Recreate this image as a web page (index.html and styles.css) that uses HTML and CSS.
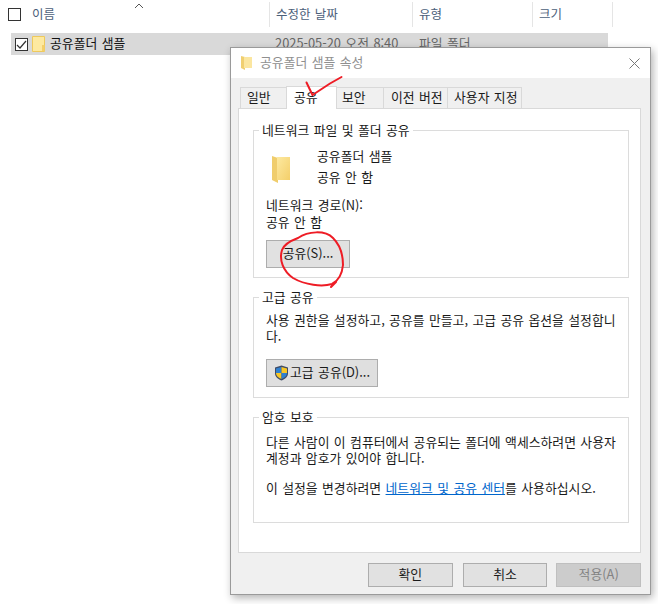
FILE: index.html
```html
<!DOCTYPE html>
<html lang="ko">
<head>
<meta charset="utf-8">
<title>공유폴더 샘플 속성</title>
<link rel="stylesheet" href="styles.css">
</head>
<body>
<svg width="0" height="0" class="defs">
  <defs>
    <linearGradient id="fg" x1="0" y1="0" x2="1" y2="1"><stop offset="0" stop-color="#fde9a0"/><stop offset="1" stop-color="#f4cf6a"/></linearGradient>
  </defs>
</svg>
<div class="explorer">
  <div class="head">
    <span class="check head-check"></span>
    <div class="col col-name">이름<svg class="caret" width="10" height="6" viewBox="0 0 10 6"><path d="M1 5 5 1l4 4" fill="none" stroke="#555"/></svg></div>
    <div class="col col-date">수정한 날짜</div>
    <div class="col col-type">유형</div>
    <div class="col col-size">크기</div>
  </div>
  <div class="row">
    <span class="check row-check"><svg width="11" height="11" viewBox="0 0 11 11"><path d="M1 6l3 3 6-7" fill="none" stroke="#333" stroke-width="1.2"/></svg></span>
    <svg class="row-folder" width="13" height="16" viewBox="0 0 13 16"><path d="M.5.5h12v15H.5z" fill="#fde9a0" stroke="#eec95c"/><path d="M10 15V9h2.500v6z" fill="#f4cf6a"/></svg>
    <span class="row-name">공유폴더 샘플</span>
    <span class="row-date">2025-05-20 오전 8:40</span>
    <span class="row-type">파일 폴더</span>
  </div>
</div>

<div class="dialog">
  <div class="titlebar">
    <svg class="title-icon" width="11" height="14" viewBox="0 0 11 14"><path d="M0 0l4 1v13l-4-2z" fill="#f0cf70"/><path d="M3 1h8v11H3z" fill="#fbe6a0"/></svg>
    <span class="title-text">공유폴더 샘플 속성</span>
    <svg class="close" width="11" height="11" viewBox="0 0 11 11"><path d="M.5.5l10 10M10.500.5l-10 10" stroke="#777" fill="none"/></svg>
  </div>
  <div class="body">
    <div class="tabs">
      <div class="tab tab-general">일반</div>
      <div class="tab tab-active">공유</div>
      <div class="tab tab-sec">보안</div>
      <div class="tab tab-prev">이전 버전</div>
      <div class="tab tab-custom">사용자 지정</div>
    </div>
    <div class="panel">
      <div class="group group-net">
        <div class="legend">네트워크 파일 및 폴더 공유</div>
        <div class="share-info">
          <svg class="big-folder" width="19" height="28" viewBox="0 0 19 28"><path d="M0 1l6 2v25l-6-3z" fill="#f0cd6c"/><path d="M5 2c5 0 9 0 13 0v23H5z" fill="url(#fg)"/></svg>
          <div class="share-lines">
            <div>공유폴더 샘플</div>
            <div>공유 안 함</div>
          </div>
        </div>
        <div class="path-label">네트워크 경로(N):</div>
        <div class="path-value">공유 안 함</div>
        <button class="btn btn-share">공유(S)...</button>
      </div>
      <div class="group group-adv">
        <div class="legend">고급 공유</div>
        <p class="text">사용 권한을 설정하고, 공유를 만들고, 고급 공유 옵션을 설정합니<br>다.</p>
        <button class="btn btn-adv">
          <svg width="15" height="16" viewBox="0 0 15 16"><path d="M7.500.5 14 2.500v6c0 3.500-3 5.500-6.500 7C4 14 1 12 1 8.500v-6z" fill="#3f4b66"/><path d="M7.500 2 2 3.500V8h5.500z" fill="#2f80d0"/><path d="M7.500 2 13 3.500V8H7.500z" fill="#f8c624"/><path d="M2 8h5.500v6C5 13 2.300 11.500 2 8z" fill="#f8c624"/><path d="M7.500 8H13c-.3 3.500-3 5-5.500 6z" fill="#2f80d0"/></svg>
          <span>고급 공유(D)...</span>
        </button>
      </div>
      <div class="group group-pass">
        <div class="legend">암호 보호</div>
        <p class="text">다른 사람이 이 컴퓨터에서 공유되는 폴더에 액세스하려면 사용자<br>계정과 암호가 있어야 합니다.</p>
        <p class="text text-gap">이 설정을 변경하려면 <a class="link">네트워크 및 공유 센터</a>를 사용하십시오.</p>
      </div>
    </div>
    <div class="actions">
      <button class="btn action">확인</button>
      <button class="btn action">취소</button>
      <button class="btn action disabled">적용(A)</button>
    </div>
  </div>
</div>

<svg class="marks" width="658" height="604" viewBox="0 0 658 604">
  <path d="M306.500 82.500 312.500 95 330 83.500 341.500 77" fill="none" stroke="#ee1c25" stroke-width="2" stroke-linecap="round" stroke-linejoin="round"/>
  <path d="M298 238C308 231 325 230 333 238 340 245 343 256 343 265 342 275 338 281 332 284 322 287 305 285 293 278 283 271 279 260 282 250 284 244 290 241 298 238ZM336 282 331 287" fill="none" stroke="#ee1c25" stroke-width="2" stroke-linecap="round"/>
</svg>
</body>
</html>
```
FILE: styles.css
```css
* { box-sizing: border-box; }
html, body { margin: 0; padding: 0; }
body {
  width: 658px;
  height: 604px;
  overflow: hidden;
  position: relative;
  background: #fff;
  color: #1a1a1a;
  font: 12.850px/16px "Noto Sans CJK KR", "Noto Sans", sans-serif;
  word-spacing: .8px;
}
.defs { position: absolute; }

/* explorer list */
.explorer { padding-top: 2px; }
.head { display: flex; height: 25px; padding-left: 8px; align-items: stretch; }
.check {
  display: flex; align-items: center; justify-content: center;
  width: 13px; height: 13px;
  border: 1px solid #333;
  background: #fff;
  flex: none;
}
.head-check { margin-top: 6px; margin-right: 11px; }
.col {
  color: #4c607a;
  font-size: 12.500px;
  display: flex; align-items: center;
  border-right: 1px solid #e5e5e5;
  position: relative;
  padding-bottom: 2px;
}
.col-name { width: 238px; }
.col-date { width: 143px; padding-left: 6px; }
.col-type { width: 120px; padding-left: 6px; }
.col-size { width: 80px; padding-left: 6px; }
.caret { position: absolute; left: 102px; top: 1px; }
.row {
  display: flex; align-items: center;
  margin: 6px 0 0 11px;
  width: 597px; height: 22px;
  background: #d9d9d9;
  padding-left: 4px;
}
.row-folder { margin-left: 4px; flex: none; }
.row-name { margin: -2px 0 0 5px; width: 225px; color: #111; }
.row-date { width: 144px; color: #666; margin-top: -2px; }
.row-type { color: #666; margin-top: -2px; }

/* dialog */
.dialog {
  position: absolute; left: 230px; top: 47px;
  width: 421px; height: 548px;
  border: 1px solid #9a9a9a;
  background: #f0f0f0;
  box-shadow: 2px 3px 8px rgba(0,0,0,.3);
}
.titlebar {
  display: flex; align-items: center;
  height: 30px;
  background: #fff;
  padding: 0 10px;
}
.title-icon { flex: none; }
.title-text { margin: -2px 0 0 8px; color: #8f8f8f; flex: 1; }
.body { padding: 0 9px 0 7px; }
.tabs { display: flex; align-items: flex-end; height: 30px; margin-left: 2px; }
.tab {
  height: 21px;
  background: #f0f0f0;
  border: 1px solid #d9d9d9;
  border-right: 0;
  border-bottom: 0;
  line-height: 18px;
  padding-left: 6px;
  white-space: nowrap;
}
.tab-general { width: 46px; }
.tab-active {
  width: 51px; height: 23px;
  background: #fff;
  border-right: 1px solid #d9d9d9;
  padding-left: 7px;
  line-height: 20px;
  position: relative;
  top: 1px;
  z-index: 1;
}
.tab-sec { width: 46px; padding-left: 5px; border-left: 0; }
.tab-prev { width: 64px; padding-left: 7px; }
.tab-custom { width: 75px; padding-left: 6px; border-right: 1px solid #d9d9d9; }
.panel {
  width: 403px; height: 445px;
  background: #fff;
  border: 1px solid #d9d9d9;
  padding: 21px 11px 0 14px;
}
.group {
  position: relative;
  border: 1px solid #dcdcdc;
  padding: 0 12px;
  margin-bottom: 19px;
  width: 376px;
}
.legend {
  position: absolute; left: 5px; top: -10px;
  background: #fff;
  padding: 0 3px;
  line-height: 17px;
  white-space: nowrap;
}
.group-net { height: 148px; padding-top: 14px; }
.group-adv { height: 101px; padding-top: 14px; }
.group-pass { height: 106px; padding-top: 16px; }
.share-info { display: flex; height: 42px; }
.big-folder { margin: 10px 0 0 6px; flex: none; }
.share-lines { margin-left: 26px; line-height: 21px; }
.path-label { margin-top: 10px; }
.path-value { margin-top: 1px; }
.text { margin: 0; line-height: 16px; white-space: nowrap; }
.text-gap { margin-top: 14px; }
.link { color: #0066cc; text-decoration: underline; }
.btn {
  display: flex; align-items: center; justify-content: center;
  font: inherit;
  word-spacing: inherit;
  color: #1a1a1a;
  background: #e1e1e1;
  border: 1px solid #adadad;
  padding: 0 0 2px;
}
.btn-share { width: 84px; height: 28px; margin-top: 10px; }
.btn-adv { width: 112px; height: 28px; margin-top: 15px; background: #dfdfdf; }
.btn-adv svg { flex: none; margin: 2px 1px 0 0; }
.actions {
  display: flex; gap: 10px;
  padding: 10px 0 0 130px;
}
.action { width: 85px; height: 24px; }
.action.disabled { background: #cccccc; color: #838383; margin-left: -1px; border-color: #bfbfbf; }

.marks { position: absolute; left: 0; top: 0; z-index: 2; pointer-events: none; }
```
